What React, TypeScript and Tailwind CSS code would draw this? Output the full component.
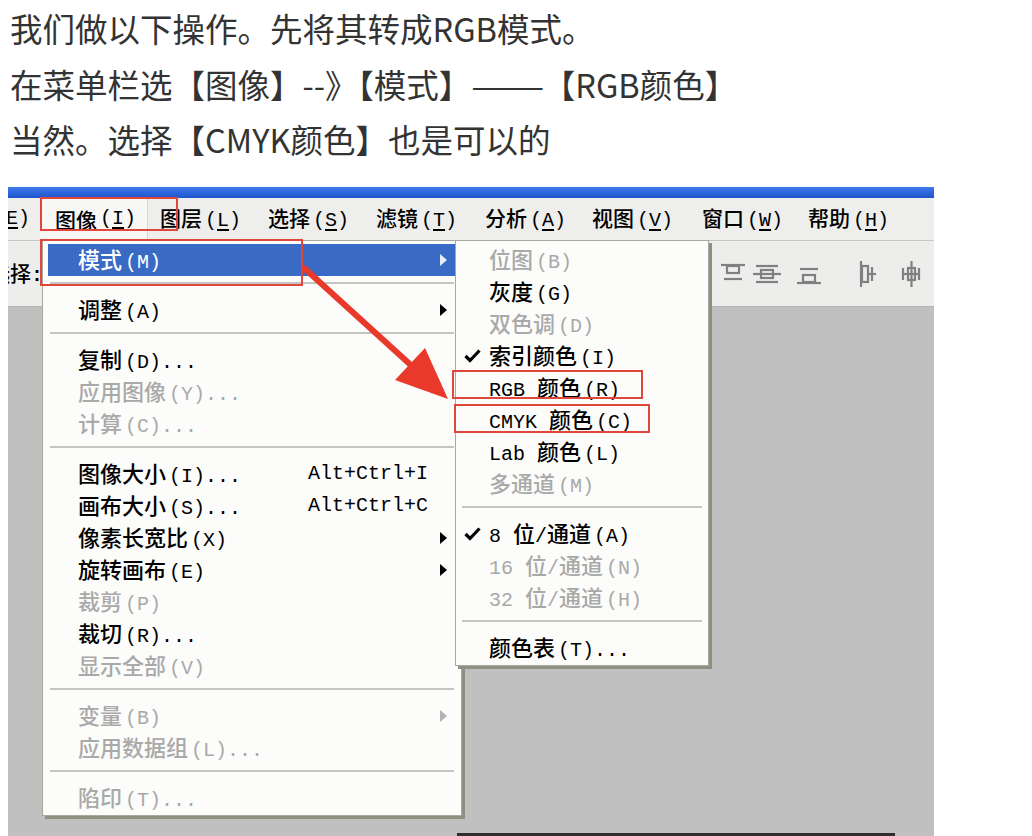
import React from "react";

const CJK_RE = /([\u2E80-\u9FFF\uF900-\uFAFF\uFF00-\uFFEF\u3000-\u303F]+)/;

function Mixed({ s }: { s: string }) {
  const parts = s.split(CJK_RE).filter((p) => p.length > 0);
  return (
    <>
      {parts.map((p, i) =>
        CJK_RE.test(p) ? (
          <span key={i} className="font-['Noto_Sans_CJK_SC',sans-serif] text-[22px] font-medium">
            {p}
          </span>
        ) : (
          <span
            key={i}
            className={
              p.startsWith("(")
                ? "font-['Liberation_Mono',monospace] text-[20px] whitespace-pre pl-[3px]"
                : "font-['Liberation_Mono',monospace] text-[20px] whitespace-pre"
            }
          >
            {p}
          </span>
        )
      )}
    </>
  );
}

type Item =
  | { t: string; dis?: boolean; arrow?: boolean; sc?: string; hl?: boolean; check?: boolean }
  | "sep";

const mainItems: Item[] = [
  { t: "模式(M)", hl: true, arrow: true },
  "sep",
  { t: "调整(A)", arrow: true },
  "sep",
  { t: "复制(D)..." },
  { t: "应用图像(Y)...", dis: true },
  { t: "计算(C)...", dis: true },
  "sep",
  { t: "图像大小(I)...", sc: "Alt+Ctrl+I" },
  { t: "画布大小(S)...", sc: "Alt+Ctrl+C" },
  { t: "像素长宽比(X)", arrow: true },
  { t: "旋转画布(E)", arrow: true },
  { t: "裁剪(P)", dis: true },
  { t: "裁切(R)..." },
  { t: "显示全部(V)", dis: true },
  "sep",
  { t: "变量(B)", dis: true, arrow: true },
  { t: "应用数据组(L)...", dis: true },
  "sep",
  { t: "陷印(T)...", dis: true },
];

const subItems: Item[] = [
  { t: "位图(B)", dis: true },
  { t: "灰度(G)" },
  { t: "双色调(D)", dis: true },
  { t: "索引颜色(I)", check: true },
  { t: "RGB 颜色(R)" },
  { t: "CMYK 颜色(C)" },
  { t: "Lab 颜色(L)" },
  { t: "多通道(M)", dis: true },
  "sep",
  { t: "8 位/通道(A)", check: true },
  { t: "16 位/通道(N)", dis: true },
  { t: "32 位/通道(H)", dis: true },
  "sep",
  { t: "颜色表(T)..." },
];

function Arrow({ color }: { color: string }) {
  return (
    <svg width="7" height="12" viewBox="0 0 7 12">
      <path d="M0 0 L7 6 L0 12 Z" fill={color} />
    </svg>
  );
}

function Check() {
  return (
    <svg width="17" height="14" viewBox="0 0 17 14">
      <path d="M1.5 7 L6 11.5 L15.5 1.5" stroke="#000" strokeWidth="3.2" fill="none" />
    </svg>
  );
}

function MainMenu() {
  return (
    <div className="absolute left-[34px] top-[53px] w-[420px] bg-[#fcfcfa] border border-[#a9a89c] shadow-[3px_3px_0_#8f8f82] pt-[3px] pb-[1px]">
      {mainItems.map((it, i) =>
        it === "sep" ? (
          <div key={i} className="h-[18px] pt-[6px] mx-[7px]">
            <div className="h-[2px] bg-[#c4c4c0]" />
          </div>
        ) : (
          <div
            key={i}
            className={
              it.hl
                ? "flex items-center h-[32px] mx-[5px] pl-[30px] pr-[9px] bg-[#3a6bc4] text-white"
                : it.dis
                ? "flex items-center h-[32px] mx-[5px] pl-[30px] pr-[9px] text-[#a9a9a9]"
                : "flex items-center h-[32px] mx-[5px] pl-[30px] pr-[9px] text-black"
            }
          >
            <div className="w-[230px] whitespace-nowrap leading-none">
              <Mixed s={it.t} />
            </div>
            <div className="flex-1 whitespace-nowrap leading-none">
              {it.sc ? (
                <span className="font-['Liberation_Mono',monospace] text-[20px]">{it.sc}</span>
              ) : null}
            </div>
            {it.arrow ? (
              <Arrow color={it.hl ? "#e6ecf8" : it.dis ? "#b4b4b4" : "#000"} />
            ) : null}
          </div>
        )
      )}
    </div>
  );
}

function SubMenu() {
  return (
    <div className="absolute left-[447px] top-[53px] w-[254px] bg-[#fcfcfa] border border-[#a9a89c] shadow-[3px_3px_0_#8f8f82] pt-[3px] pb-[1px]">
      {subItems.map((it, i) =>
        it === "sep" ? (
          <div key={i} className="h-[18px] pt-[6px] mx-[6px]">
            <div className="h-[2px] bg-[#c4c4c0]" />
          </div>
        ) : (
          <div
            key={i}
            className={
              it.dis
                ? "flex items-center h-[32px] pl-[8px] text-[#a9a9a9]"
                : "flex items-center h-[32px] pl-[8px] text-black"
            }
          >
            <div className="w-[25px] flex items-center">{it.check ? <Check /> : null}</div>
            <div className="whitespace-nowrap leading-none">
              <Mixed s={it.t} />
            </div>
          </div>
        )
      )}
    </div>
  );
}

function BarItem({ cn, k, w }: { cn: string; k: string; w: string }) {
  return (
    <div className={w}>
      <span className="font-['Noto_Sans_CJK_SC',sans-serif] text-[21px] font-medium">{cn}</span>
      <span className="font-['Liberation_Mono',monospace] text-[20px] pl-[3px]">
        (<span className="underline underline-offset-[3px]">{k}</span>)
      </span>
    </div>
  );
}

function AlignIcons() {
  const st = { stroke: "#808080", strokeWidth: 2.2, fill: "none" } as const;
  return (
    <div className="flex items-center ml-auto mr-[10px]">
      <svg width="26" height="24" viewBox="0 0 26 24">
        <path d="M1 3H25" {...st} />
        <rect x="7" y="4" width="12" height="7" {...st} />
        <path d="M4 17H22" {...st} />
      </svg>
      <svg width="30" height="24" viewBox="0 0 30 24" className="ml-[6px]">
        <path d="M4 4H26" {...st} />
        <path d="M1 12H29" {...st} />
        <rect x="9" y="8" width="12" height="8" {...st} />
        <path d="M4 20H26" {...st} />
      </svg>
      <svg width="26" height="24" viewBox="0 0 26 24" className="ml-[14px]">
        <path d="M4 7H22" {...st} />
        <rect x="7" y="13" width="12" height="7" {...st} />
        <path d="M1 21H25" {...st} />
      </svg>
      <svg width="22" height="28" viewBox="0 0 22 28" className="ml-[36px]">
        <path d="M3 1V27" {...st} />
        <rect x="4" y="6" width="6" height="16" {...st} />
        <path d="M14 7V21" {...st} />
        <path d="M10 14H18" {...st} />
      </svg>
      <svg width="26" height="28" viewBox="0 0 26 28" className="ml-[18px]">
        <path d="M5 8V20" {...st} />
        <path d="M5 14H21" {...st} />
        <rect x="10" y="8" width="7" height="12" {...st} />
        <path d="M13.5 1V27" {...st} />
        <path d="M21 8V20" {...st} />
      </svg>
    </div>
  );
}

function Screenshot() {
  return (
    <div className="relative ml-[8px] w-[926px] h-[649px] overflow-hidden flex flex-col bg-[#c0c0c0]">
      {/* title bar */}
      <div className="h-[11px] bg-gradient-to-b from-[#3f7ae8] via-[#2d66dc] to-[#1f55c9]" />
      {/* menubar */}
      <div className="h-[42px] bg-[#eeeeec] flex items-center text-black leading-none">
        <div className="w-[32px] overflow-hidden whitespace-nowrap">
          <span className="font-['Liberation_Mono',monospace] text-[20px] inline-block -ml-[2px]">
            <span className="underline underline-offset-[3px]">E</span>)
          </span>
        </div>
        <div className="w-[108px] h-full flex items-center pl-[15px] bg-[#f7f7f6] border-r border-[#d6d6d4]">
          <span className="font-['Noto_Sans_CJK_SC',sans-serif] text-[21px] font-medium">图像</span>
          <span className="font-['Liberation_Mono',monospace] text-[20px] pl-[3px]">
            (<span className="underline underline-offset-[3px]">I</span>)
          </span>
        </div>
        <div className="pl-[12px] flex items-center">
          <BarItem cn="图层" k="L" w="w-[108px]" />
          <BarItem cn="选择" k="S" w="w-[108px]" />
          <BarItem cn="滤镜" k="T" w="w-[109px]" />
          <BarItem cn="分析" k="A" w="w-[107px]" />
          <BarItem cn="视图" k="V" w="w-[110px]" />
          <BarItem cn="窗口" k="W" w="w-[106px]" />
          <BarItem cn="帮助" k="H" w="w-[100px]" />
        </div>
      </div>
      <div className="h-[1px] bg-[#c6c6c4]" />
      {/* toolbar */}
      <div className="h-[66px] bg-[#ededeb] border-b border-[#b4b4b2] flex items-center">
        <div className="w-[40px] overflow-hidden whitespace-nowrap leading-none">
          <span className="inline-block -ml-[19px]">
            <span className="font-['Noto_Sans_CJK_SC',sans-serif] text-[21px] font-medium">选择</span>
            <span className="font-['Liberation_Mono',monospace] text-[20px] font-bold">:</span>
          </span>
        </div>
        <AlignIcons />
      </div>
      {/* workspace */}
      <div className="flex-1 bg-[#c0c0c0] flex flex-col justify-end">
        <div className="ml-[449px] w-[438px] h-[3px] bg-[#2e2e2e]" />
      </div>

      <MainMenu />
      <SubMenu />

      {/* red highlight boxes */}
      <div className="absolute left-[32px] top-[10px] w-[138px] h-[34px] border-2 border-[#e2453a]" />
      <div className="absolute left-[32px] top-[52px] w-[263px] h-[47px] border-2 border-[#e2453a]" />
      <div className="absolute left-[444px] top-[183px] w-[191px] h-[29px] border-2 border-[#e2453a]" />
      <div className="absolute left-[446px] top-[217px] w-[196px] h-[29px] border-2 border-[#e2453a]" />

      {/* red arrow */}
      <svg className="absolute left-0 top-0" width="926" height="649" viewBox="0 0 926 649">
        <path d="M295 80 L405 180" stroke="#e8392b" strokeWidth="6" strokeLinecap="butt" />
        <path d="M440 212 L387 193 L417 161 Z" fill="#e8392b" />
      </svg>
    </div>
  );
}

export default function App() {
  return (
    <div className="w-[1032px] h-[836px] bg-white overflow-hidden">
      <div className="h-[187px] pl-[10px] text-[32.5px] leading-[55.5px] text-[#333333] font-['Noto_Sans_CJK_SC',sans-serif] whitespace-nowrap">
        <div>我们做以下操作。先将其转成RGB模式。</div>
        <div>
          在菜单栏选【图像】--》【模式】
          <span className="inline-block origin-left scale-x-[1.35] mr-[17px]">——</span>
          【RGB颜色】
        </div>
        <div>当然。选择【CMYK颜色】也是可以的</div>
      </div>
      <Screenshot />
    </div>
  );
}
